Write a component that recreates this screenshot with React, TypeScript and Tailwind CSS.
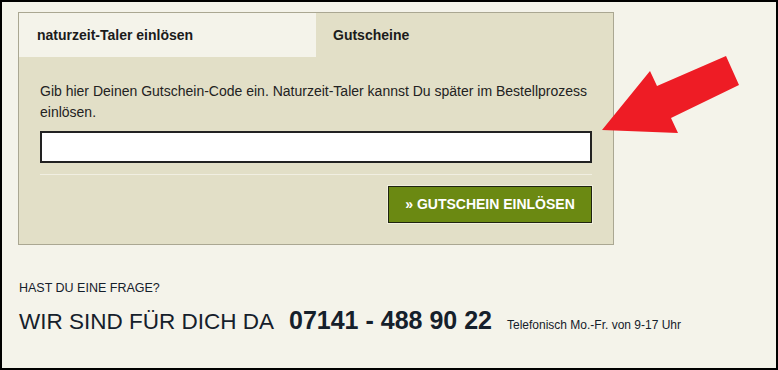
import React from 'react';

const font = { fontFamily: '"Liberation Sans", Arial, sans-serif' };

export default function App() {
  return (
    <div
      className="relative w-[778px] h-[370px] bg-[#f4f3ea] border-2 border-black overflow-hidden text-[#1b1b1b]"
      style={font}
    >
      <div className="pl-4 pt-[10px]">
        {/* Voucher panel */}
        <div className="w-[596px] border border-[#aaa792] bg-[#e2dfc7]">
          <div className="flex h-[44px]">
            <div className="w-[297px] bg-[#f4f3ea] flex items-center pl-[18px] text-[14px] font-bold">
              naturzeit-Taler einlösen
            </div>
            <div className="flex-1 flex items-center pl-[17px] text-[14px] font-bold">
              Gutscheine
            </div>
          </div>
          <div className="px-[21px] pt-[24px] pb-[21px]">
            <p className="text-[14px] leading-[21px] text-[#222]">
              Gib hier Deinen Gutschein-Code ein. Naturzeit-Taler kannst Du später im Bestellprozess einlösen.
            </p>
            <input
              type="text"
              className="mt-[8px] block w-full h-[32px] bg-white border-2 border-[#222] outline-none"
            />
            <div className="mt-[11px] h-px bg-[#f1efe2]" />
            <div className="flex justify-end mt-[11px]">
              <button className="h-[37px] w-[204px] bg-[#6b8912] border border-[#1f2410] shadow-[0_0_0_1px_#f0eedd] text-white text-[14px] font-bold">
                » GUTSCHEIN EINLÖSEN
              </button>
            </div>
          </div>
        </div>

        {/* Contact */}
        <div className="mt-[35px] pl-px text-[#15202b]">
          <div className="text-[12.5px] leading-[16px] font-medium">HAST DU EINE FRAGE?</div>
          <div className="flex items-baseline mt-[10px]">
            <span className="text-[22.5px] leading-[28px]">WIR SIND FÜR DICH DA</span>
            <span className="ml-[15px] text-[25px] leading-[28px] font-bold">07141 - 488 90 22</span>
            <span className="ml-[15px] text-[12px]">Telefonisch Mo.-Fr. von 9-17 Uhr</span>
          </div>
        </div>
      </div>

      {/* Red annotation arrow */}
      <svg className="absolute left-0 top-0 pointer-events-none" width="778" height="370">
        <polygon
          points="600,128 648,69 655,84 724,54 737,83 669,116 676,131"
          fill="#ee1c25"
        />
      </svg>
    </div>
  );
}
